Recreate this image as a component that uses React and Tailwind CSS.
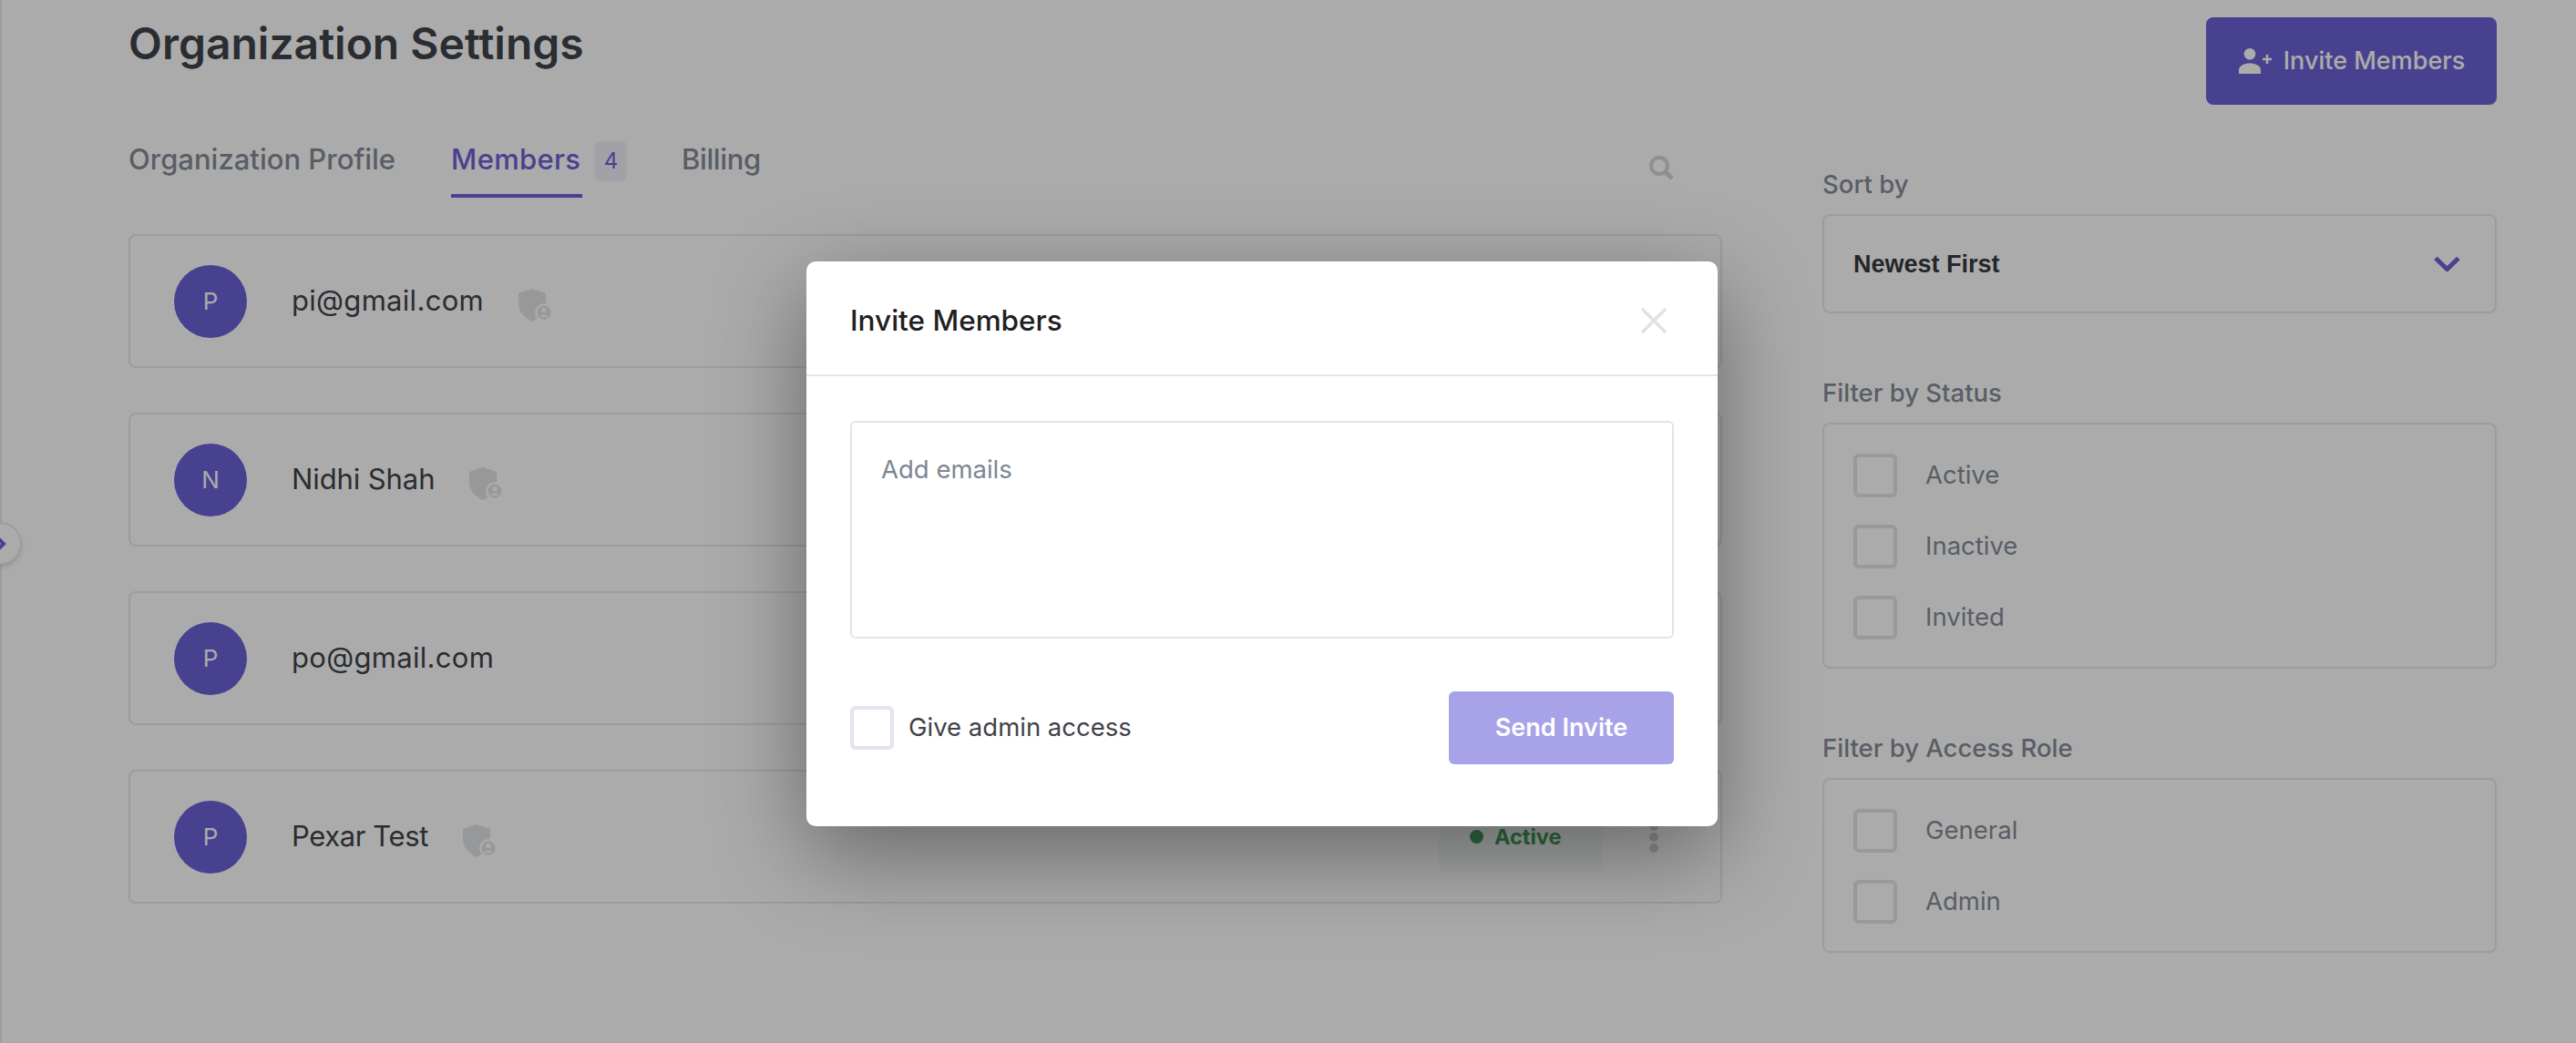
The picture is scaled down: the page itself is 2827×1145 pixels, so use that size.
import React from 'react';

const members = [
  { id: 1, initial: 'P', name: 'pi@gmail.com', nameClass: 'tracking-[0.3px]' },
  { id: 2, initial: 'N', name: 'Nidhi Shah', nameClass: 'tracking-[-0.1px]' },
  { id: 3, initial: 'P', name: 'po@gmail.com', nameClass: 'tracking-[0.3px]' },
  { id: 4, initial: 'P', name: 'Pexar Test', nameClass: 'tracking-[-0.4px]' },
];

function ShieldIcon() {
  return (
    <svg width="38" height="36" viewBox="0 0 38 36" className="ml-[38px] mt-[8px] shrink-0">
      <path d="M15 0 L30 5 V16 C30 26 23 32 15 36 C7 32 0 26 0 16 V5 Z" fill="#e2e3e5" />
      <circle cx="28" cy="26" r="10" fill="#fff" />
      <circle cx="28" cy="26" r="7.5" fill="#e2e3e5" />
      <circle cx="28" cy="23.5" r="2.6" fill="#fff" />
      <path d="M23.5 31 C23.5 27.5 32.5 27.5 32.5 31 Z" fill="#fff" />
    </svg>
  );
}

function UserPlusIcon() {
  return (
    <svg width="38" height="28" viewBox="0 0 38 28" fill="currentColor">
      <circle cx="13" cy="6.3" r="6.3" />
      <path d="M1 28 V24 C1 19 7 16.5 13 16.5 S25 19 25 24 V28 Z" />
      <path d="M27 12 H37 M32 7 V17" stroke="currentColor" strokeWidth="2.5" fill="none" />
    </svg>
  );
}

function FilterBox({ title, options }) {
  return (
    <div>
      <p className="h-[36px] mb-[15px] text-[27.5px] leading-[36px] font-medium text-[#858d99]">{title}</p>
      <div className="rounded-lg border-2 border-[#e8e8f4] px-[32px] pt-[32px] pb-[30px] flex flex-col gap-[30px]">
        {options.map((opt) => (
          <label key={opt} className="flex items-center gap-[31px] h-[48px] text-[27.5px] text-[#858d99]">
            <input type="checkbox" className="appearance-none w-[48px] h-[48px] rounded-md border-4 border-[#e2e4ee] bg-white" />
            {opt}
          </label>
        ))}
      </div>
    </div>
  );
}

function MemberRow({ member }) {
  return (
    <div className="h-[147px] rounded-lg border-2 border-[#e8e8f4] pl-[48px] pr-[68px] flex items-center">
      <div className="w-[80px] h-[80px] rounded-full bg-[#6c61d6] text-white text-[26px] flex items-center justify-center">
        {member.initial}
      </div>
      <span className={`ml-[49px] text-[31px] text-[#3f4449] ${member.nameClass}`}>{member.name}</span>
      {member.id === 3 ? null : <ShieldIcon />}
      <div className="ml-auto flex items-center gap-[51px]">
        <div className="w-[180px] h-[76px] rounded-lg bg-[#f5fbf7] pl-[34px] flex items-center gap-[12px] text-[23.5px] font-bold text-[#469f5e]">
          <span className="w-[15px] h-[15px] rounded-full bg-[#469f5e]" />
          Active
        </div>
        <div className="flex flex-col gap-[2px]">
          <span className="w-[10px] h-[10px] rounded-full bg-[#d4d4d8]" />
          <span className="w-[10px] h-[10px] rounded-full bg-[#d4d4d8]" />
          <span className="w-[10px] h-[10px] rounded-full bg-[#d4d4d8]" />
        </div>
      </div>
    </div>
  );
}

export default function App() {
  return (
    <div className="relative flex h-screen overflow-hidden bg-white font-[Inter,sans-serif]">
      <div className="w-[2px] shrink-0 bg-[#e8e8f4]" />

      {/* sidebar toggle */}
      <div className="absolute left-[-23px] top-[573px] w-[47px] h-[47px] rounded-full border-2 border-[#e8e8f4] bg-white shadow-md flex items-center justify-center">
        <svg width="12" height="16" viewBox="0 0 12 16" fill="none" stroke="#6c61d6" strokeWidth="4">
          <path d="M3 2 L9 8 L3 14" />
        </svg>
      </div>

      <main className="flex-1 pl-[139px] pr-[87px] pt-[19px]">
        <header className="flex items-start justify-between h-[96px]">
          <h1 className="text-[48px] leading-[58px] font-semibold text-[#3f4449]">Organization Settings</h1>
          <button className="w-[319px] h-[96px] rounded-lg bg-[#6c61d6] text-white text-[27px] font-medium flex items-center justify-center gap-[12px]">
            <UserPlusIcon />
            Invite Members
          </button>
        </header>

        <div className="grid grid-cols-[1749px_740px] gap-x-[110px]">
          <section>
            <div className="mt-[41px] mb-[40px] flex items-start text-[31px] leading-[38px] font-medium text-[#858d99]">
              <span className="mr-[61px]">Organization Profile</span>
              <span className="w-[144px] pb-[19px] border-b-4 border-[#6c61d6] text-[#6c61d6] tracking-[0.3px]">Members</span>
              <span className="ml-[14px] mt-[-1px] w-[35px] h-[44px] rounded-md bg-[#f1f1f9] text-[#6c61d6] text-[24px] font-normal flex items-center justify-center">4</span>
              <span className="ml-[60px] tracking-[-0.4px]">Billing</span>
              <svg width="29" height="27" viewBox="0 0 29 27" fill="none" stroke="#d5d5da" className="ml-auto mr-[52px] mt-[15px]">
                <circle cx="12" cy="11" r="9" strokeWidth="4" />
                <path d="M19 18 L26 25" strokeWidth="5" />
              </svg>
            </div>

            <div className="flex flex-col gap-[49px]">
              {members.map((m) => (
                <MemberRow key={m.id} member={m} />
              ))}
            </div>
          </section>

          <aside className="pt-[69px] flex flex-col gap-[69px]">
            <div>
              <p className="h-[36px] mb-[15px] text-[27.5px] leading-[36px] font-medium text-[#858d99]">Sort by</p>
              <div className="h-[109px] rounded-lg border-2 border-[#e8e8f4] pl-[32px] pr-[38px] flex items-center justify-between">
                <span className="mt-[2px] font-['Liberation_Sans',sans-serif] font-bold text-[27px] text-[#363a3f]">Newest First</span>
                <svg width="29" height="16" viewBox="0 0 29 16" fill="none" stroke="#6c61d6" strokeWidth="5">
                  <path d="M2 1.5 L14.5 13.5 L27 1.5" />
                </svg>
              </div>
            </div>
            <FilterBox title="Filter by Status" options={['Active', 'Inactive', 'Invited']} />
            <FilterBox title="Filter by Access Role" options={['General', 'Admin']} />
          </aside>
        </div>
      </main>

      {/* modal overlay */}
      <div className="absolute inset-0 bg-black/33 pl-[885px] pt-[287px]">
        <div className="w-[1000px] h-[620px] rounded-[10px] bg-white shadow-[0_30px_100px_rgba(0,0,0,0.4)]">
          <div className="h-[126px] border-b-2 border-[#e3e5ee] pl-[48px] pr-[55px] pt-[6px] flex items-center justify-between">
            <h2 className="text-[31.5px] font-medium text-[#1f2024]">Invite Members</h2>
            <svg width="30" height="30" viewBox="0 0 30 30" stroke="#e2e2e2" strokeWidth="3.5">
              <path d="M2 2 L28 28 M28 2 L2 28" />
            </svg>
          </div>
          <div className="px-[48px] pt-[49px]">
            <textarea
              placeholder="Add emails"
              className="block w-full h-[239px] resize-none rounded-md border-2 border-[#e2e4ee] px-[32px] pt-[33px] text-[27.5px] leading-[36px] placeholder:text-[#7d8693] outline-none"
            />
            <div className="mt-[58px] flex items-center justify-between">
              <label className="flex items-center gap-[16px] text-[27.5px] text-[#3f4349]">
                <input type="checkbox" className="appearance-none w-[48px] h-[48px] rounded-md border-4 border-[#e2e4ee] bg-white" />
                Give admin access
              </label>
              <button disabled className="w-[247px] h-[80px] rounded-md bg-[#a8a3e8] text-white text-[27px] font-semibold">
                Send Invite
              </button>
            </div>
          </div>
        </div>
      </div>
    </div>
  );
}
